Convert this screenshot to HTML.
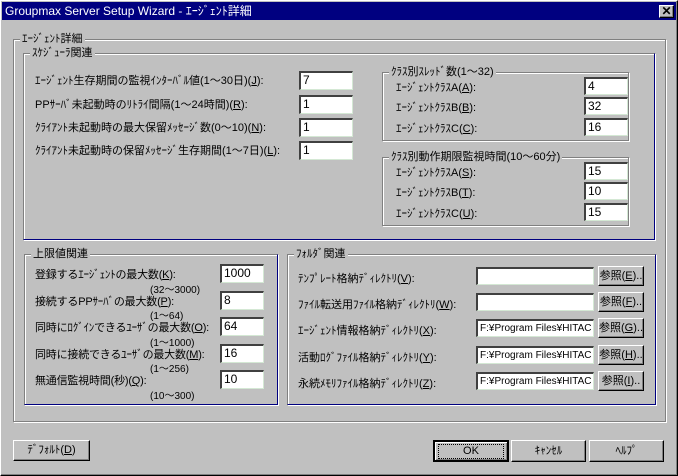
<!DOCTYPE html>
<html><head><meta charset="utf-8"><style>
*{box-sizing:border-box;margin:0;padding:0}
body{width:678px;height:476px;background:#c0c0c0;position:relative;overflow:hidden;font-family:"Liberation Sans","Noto Sans CJK JP",sans-serif;font-size:11px;color:#000}
.a{position:absolute;white-space:nowrap}
.g{position:absolute;border:1px solid #808080;box-shadow:1px 1px 0 #fff, inset 1px 1px 0 #fff}
.gt{position:absolute;background:#c0c0c0;padding:0 2px;top:-8px;left:6px;line-height:14px;white-space:nowrap}
.in{position:absolute;background:#fff;border-top:2px solid #404040;border-left:2px solid #404040;border-right:1px solid #d4e8d4;border-bottom:1px solid #d4e8d4;padding-left:2px;line-height:15px;font-size:12px;white-space:nowrap;overflow:hidden}
.bt{position:absolute;background:#c0c0c0;border:1px solid;border-color:#fff #000 #000 #fff;box-shadow:inset -1px -1px 0 #808080;text-align:center;white-space:nowrap}
.blue{border-bottom-color:#000080;border-right-color:#000080}
.r{font-size:10px}
.bl{font-size:11px;letter-spacing:-0.2px}
</style></head><body>
<div class="a" style="left:0;top:0;width:678px;height:476px;border:1px solid;border-color:#fff #000 #000 #fff;box-shadow:inset -1px -1px 0 #808080"></div>
<div class="a" style="left:2px;top:2px;width:674px;height:18px;background:#000080;color:#fff;font-size:12px;line-height:18px;padding-left:3px">Groupmax Server Setup Wizard - ｴｰｼﾞｪﾝﾄ詳細</div>
<div class="bt" style="left:659px;top:5px;width:15px;height:13px;line-height:11px;font-size:12px;font-weight:bold">✕</div>

<div class="g" style="left:13px;top:39px;width:653px;height:383px"><span class="gt">ｴｰｼﾞｪﾝﾄ詳細</span></div>
<div class="g blue" style="left:23px;top:53px;width:632px;height:187px"><span class="gt">ｽｹｼﾞｭｰﾗ関連</span></div>
<div class="a" style="left:35px;top:72px">ｴｰｼﾞｪﾝﾄ生存期間の監視ｲﾝﾀｰﾊﾞﾙ値(1～30日)(<u>J</u>):</div>
<div class="a" style="left:35px;top:96px">PPｻｰﾊﾞ未起動時のﾘﾄﾗｲ間隔(1～24時間)(<u>R</u>):</div>
<div class="a" style="left:35px;top:119px">ｸﾗｲｱﾝﾄ未起動時の最大保留ﾒｯｾｰｼﾞ数(0～10)(<u>N</u>):</div>
<div class="a" style="left:35px;top:142px">ｸﾗｲｱﾝﾄ未起動時の保留ﾒｯｾｰｼﾞ生存期間(1～7日)(<u>L</u>):</div>
<div class="in" style="left:299px;top:71px;width:54px;height:19px">7</div>
<div class="in" style="left:299px;top:95px;width:54px;height:19px">1</div>
<div class="in" style="left:299px;top:118px;width:54px;height:19px">1</div>
<div class="in" style="left:299px;top:141px;width:54px;height:19px">1</div>

<div class="g" style="left:382px;top:72px;width:247px;height:69px"><span class="gt">ｸﾗｽ別ｽﾚｯﾄﾞ数(1～32)</span></div>
<div class="a" style="left:396px;top:79px">ｴｰｼﾞｪﾝﾄｸﾗｽA(<u>A</u>):</div>
<div class="a" style="left:396px;top:99px">ｴｰｼﾞｪﾝﾄｸﾗｽB(<u>B</u>):</div>
<div class="a" style="left:396px;top:120px">ｴｰｼﾞｪﾝﾄｸﾗｽC(<u>C</u>):</div>
<div class="in" style="left:584px;top:77px;width:44px;height:18px">4</div>
<div class="in" style="left:584px;top:97px;width:44px;height:18px">32</div>
<div class="in" style="left:584px;top:118px;width:44px;height:18px">16</div>

<div class="g" style="left:382px;top:157px;width:247px;height:69px"><span class="gt">ｸﾗｽ別動作期限監視時間(10～60分)</span></div>
<div class="a" style="left:396px;top:164px">ｴｰｼﾞｪﾝﾄｸﾗｽA(<u>S</u>):</div>
<div class="a" style="left:396px;top:184px">ｴｰｼﾞｪﾝﾄｸﾗｽB(<u>T</u>):</div>
<div class="a" style="left:396px;top:205px">ｴｰｼﾞｪﾝﾄｸﾗｽC(<u>U</u>):</div>
<div class="in" style="left:584px;top:162px;width:44px;height:18px">15</div>
<div class="in" style="left:584px;top:182px;width:44px;height:18px">10</div>
<div class="in" style="left:584px;top:203px;width:44px;height:18px">15</div>

<div class="g blue" style="left:24px;top:254px;width:254px;height:151px"><span class="gt">上限値関連</span></div>
<div class="a bl" style="left:35px;top:266px">登録するｴｰｼﾞｪﾝﾄの最大数(<u>K</u>):</div>
<div class="a r" style="left:150px;top:281px">(32～3000)</div>
<div class="a bl" style="left:35px;top:293px">接続するPPｻｰﾊﾞの最大数(<u>P</u>):</div>
<div class="a r" style="left:150px;top:307px">(1～64)</div>
<div class="a bl" style="left:35px;top:319px">同時にﾛｸﾞｲﾝできるﾕｰｻﾞの最大数(<u>O</u>):</div>
<div class="a r" style="left:150px;top:334px">(1～1000)</div>
<div class="a bl" style="left:35px;top:346px">同時に接続できるﾕｰｻﾞの最大数(<u>M</u>):</div>
<div class="a r" style="left:150px;top:360px">(1～256)</div>
<div class="a bl" style="left:35px;top:372px">無通信監視時間(秒)(<u>Q</u>):</div>
<div class="a r" style="left:150px;top:387px">(10～300)</div>
<div class="in" style="left:220px;top:264px;width:44px;height:19px">1000</div>
<div class="in" style="left:220px;top:291px;width:44px;height:19px">8</div>
<div class="in" style="left:220px;top:317px;width:44px;height:19px">64</div>
<div class="in" style="left:220px;top:344px;width:44px;height:19px">16</div>
<div class="in" style="left:220px;top:370px;width:44px;height:19px">10</div>

<div class="g blue" style="left:287px;top:254px;width:369px;height:151px"><span class="gt">ﾌｫﾙﾀﾞ関連</span></div>
<div class="a" style="left:298px;top:270px">ﾃﾝﾌﾟﾚｰﾄ格納ﾃﾞｨﾚｸﾄﾘ(<u>V</u>):</div>
<div class="a" style="left:298px;top:296px">ﾌｧｲﾙ転送用ﾌｧｲﾙ格納ﾃﾞｨﾚｸﾄﾘ(<u>W</u>):</div>
<div class="a" style="left:298px;top:322px">ｴｰｼﾞｪﾝﾄ情報格納ﾃﾞｨﾚｸﾄﾘ(<u>X</u>):</div>
<div class="a" style="left:298px;top:349px">活動ﾛｸﾞﾌｧｲﾙ格納ﾃﾞｨﾚｸﾄﾘ(<u>Y</u>):</div>
<div class="a" style="left:298px;top:375px">永続ﾒﾓﾘﾌｧｲﾙ格納ﾃﾞｨﾚｸﾄﾘ(<u>Z</u>):</div>
<div class="in" style="left:476px;top:267px;width:118px;height:18px"></div>
<div class="in" style="left:476px;top:293px;width:118px;height:18px"></div>
<div class="in" style="left:476px;top:319px;width:118px;height:18px;font-size:10px">F:¥Program Files¥HITAC</div>
<div class="in" style="left:476px;top:346px;width:118px;height:18px;font-size:10px">F:¥Program Files¥HITAC</div>
<div class="in" style="left:476px;top:372px;width:118px;height:18px;font-size:10px">F:¥Program Files¥HITAC</div>
<div class="bt" style="left:598px;top:266px;width:46px;height:20px;line-height:18px">参照(<u>E</u>)..</div>
<div class="bt" style="left:598px;top:292px;width:46px;height:20px;line-height:18px">参照(<u>F</u>)..</div>
<div class="bt" style="left:598px;top:318px;width:46px;height:20px;line-height:18px">参照(<u>G</u>)..</div>
<div class="bt" style="left:598px;top:345px;width:46px;height:20px;line-height:18px">参照(<u>H</u>)..</div>
<div class="bt" style="left:598px;top:371px;width:46px;height:20px;line-height:18px">参照(<u>I</u>)..</div>

<div class="bt" style="left:13px;top:440px;width:77px;height:21px;line-height:19px">ﾃﾞﾌｫﾙﾄ(<u>D</u>)</div>
<div class="bt" style="left:433px;top:440px;width:76px;height:22px;line-height:18px;border:2px solid #000;box-shadow:inset 1px 1px 0 #fff,inset -1px -1px 0 #808080"><span style="display:inline-block;border:1px dotted #000;width:66px;line-height:13px;margin-top:2px">OK</span></div>
<div class="bt" style="left:511px;top:440px;width:75px;height:22px;line-height:20px">ｷｬﾝｾﾙ</div>
<div class="bt" style="left:589px;top:440px;width:75px;height:22px;line-height:20px">ﾍﾙﾌﾟ</div>
</body></html>
